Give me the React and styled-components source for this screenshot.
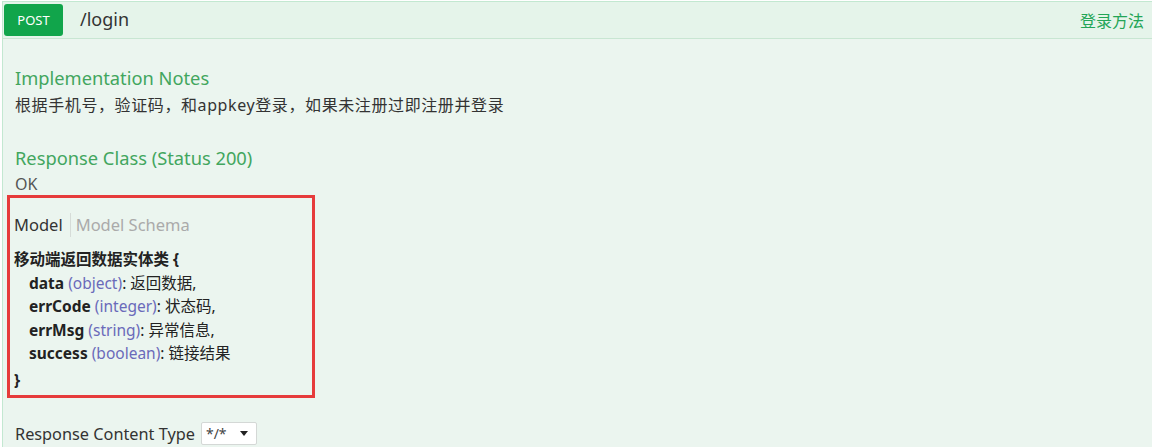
import React from "react";
import styled, { createGlobalStyle } from "styled-components";

const Global = createGlobalStyle`
  html, body { margin: 0; padding: 0; background: #ffffff; }
  body { font-family: "Noto Sans", "Open Sans", "Noto Sans CJK SC", sans-serif; color: #333; }
`;

const Page = styled.div`
  width: 1152px;
  height: 447px;
  overflow: hidden;
  padding: 1px 0 0 2px;
  box-sizing: border-box;
`;

const Operation = styled.div`
  border: 1px solid #c3e8d1;
  border-right: none;
  background: #ebf5ef;
  height: 460px;
`;

const Heading = styled.div`
  display: flex;
  align-items: center;
  height: 35px;
  padding: 1px 8px 0 1px;
  background: #e5f4ea;
  border-bottom: 1px solid #c8e6d2;
`;

const Method = styled.span`
  display: flex;
  align-items: center;
  justify-content: center;
  width: 59px;
  height: 32px;
  background: #11a54b;
  color: #ffffff;
  border-radius: 3px;
  font-size: 13px;
  align-self: flex-start;
  margin-top: 1px;
`;

const Path = styled.span`
  margin-left: 17px;
  font-size: 18px;
  color: #333;
  flex: 1;
  margin-top: -4px;
`;

const Summary = styled.span`
  font-size: 16px;
  color: #23a557;
  font-family: "Noto Sans CJK SC", sans-serif;
  margin-top: -2px;
`;

const Content = styled.div`
  padding: 27px 12px 0 12px;
`;

const Title = styled.h4`
  margin: 0;
  font-size: 18.3px;
  font-weight: 400;
  color: #42a65e;
  line-height: 24px;
`;

const Text = styled.p`
  margin: 4px 0 0 0;
  font-size: 16px;
  line-height: 22px;
  letter-spacing: 0.6px;
  color: #333;
  font-family: "Noto Sans", "Noto Sans CJK SC", sans-serif;
`;

const Section = styled.div`
  margin-bottom: ${(p) => p.$mb || 0}px;
`;

const Ok = styled.div`
  font-size: 16px;
  line-height: 18px;
  color: #555;
  margin-top: 5px;
`;

const Highlight = styled.div`
  margin: 2px 0 0 -8px;
  width: 308px;
  height: 203px;
  border: 3px solid #e63b3b;
  padding: 15px 0 0 4px;
  box-sizing: border-box;
`;

const Tabs = styled.div`
  display: flex;
  align-items: center;
  font-size: 16.5px;
  line-height: 22px;
`;

const Tab = styled.span`
  color: ${(p) => (p.$active ? "#333" : "#aaa")};
  padding: 0 ${(p) => (p.$active ? 7 : 4)}px 0 ${(p) => (p.$active ? 0 : 5)}px;
  border-left: ${(p) => (p.$active ? "none" : "1px solid #d6dcd8")};
  line-height: 24px;
`;

const Schema = styled.div`
  margin-top: 11px;
  font-size: 15.5px;
  line-height: 23.5px;
  color: #222;
  font-family: "Noto Sans", "Noto Sans CJK SC", sans-serif;
`;

const StrongLine = styled.div`
  font-weight: 700;
  margin-top: ${(p) => p.$mt || 0}px;
`;

const Prop = styled.div`
  padding-left: 15px;
`;

const PropName = styled.b`
  font-weight: 700;
  color: #222;
`;

const PropType = styled.span`
  color: #6a6aba;
`;

const ContentType = styled.div`
  margin-top: 24px;
  display: flex;
  align-items: center;
  font-size: 16.3px;
  color: #333;
`;

const Select = styled.div`
  margin-left: 6px;
  width: 56px;
  height: 23px;
  box-sizing: border-box;
  border: 1px solid #d4d8d6;
  background: #fff;
  border-radius: 2px;
  display: flex;
  align-items: center;
  justify-content: space-between;
  padding: 0 8px 0 4px;
  font-size: 14px;
  color: #444;
`;

const Caret = styled.span`
  width: 0;
  height: 0;
  border-left: 4px solid transparent;
  border-right: 4px solid transparent;
  border-top: 5px solid #222;
`;

const props = [
  ["data", "object", "返回数据,"],
  ["errCode", "integer", "状态码,"],
  ["errMsg", "string", "异常信息,"],
  ["success", "boolean", "链接结果"],
];

export default function App() {
  return (
    <>
      <Global />
      <Page>
        <Operation>
          <Heading>
            <Method>POST</Method>
            <Path>/login</Path>
            <Summary>登录方法</Summary>
          </Heading>
          <Content>
            <Section $mb={30}>
              <Title>Implementation Notes</Title>
              <Text>根据手机号，验证码，和appkey登录，如果未注册过即注册并登录</Text>
            </Section>
            <Section>
              <Title>Response Class (Status 200)</Title>
              <Ok>OK</Ok>
              <Highlight>
                <Tabs>
                  <Tab $active>Model</Tab>
                  <Tab>Model Schema</Tab>
                </Tabs>
                <Schema>
                  <StrongLine>移动端返回数据实体类 {"{"}</StrongLine>
                  {props.map(([n, t, d]) => (
                    <Prop key={n}>
                      <PropName>{n}</PropName> <PropType>({t})</PropType>: {d}
                    </Prop>
                  ))}
                  <StrongLine $mt={3}>{"}"}</StrongLine>
                </Schema>
              </Highlight>
            </Section>
            <ContentType>
              Response Content Type
              <Select>
                <span>*/*</span>
                <Caret />
              </Select>
            </ContentType>
          </Content>
        </Operation>
      </Page>
    </>
  );
}
